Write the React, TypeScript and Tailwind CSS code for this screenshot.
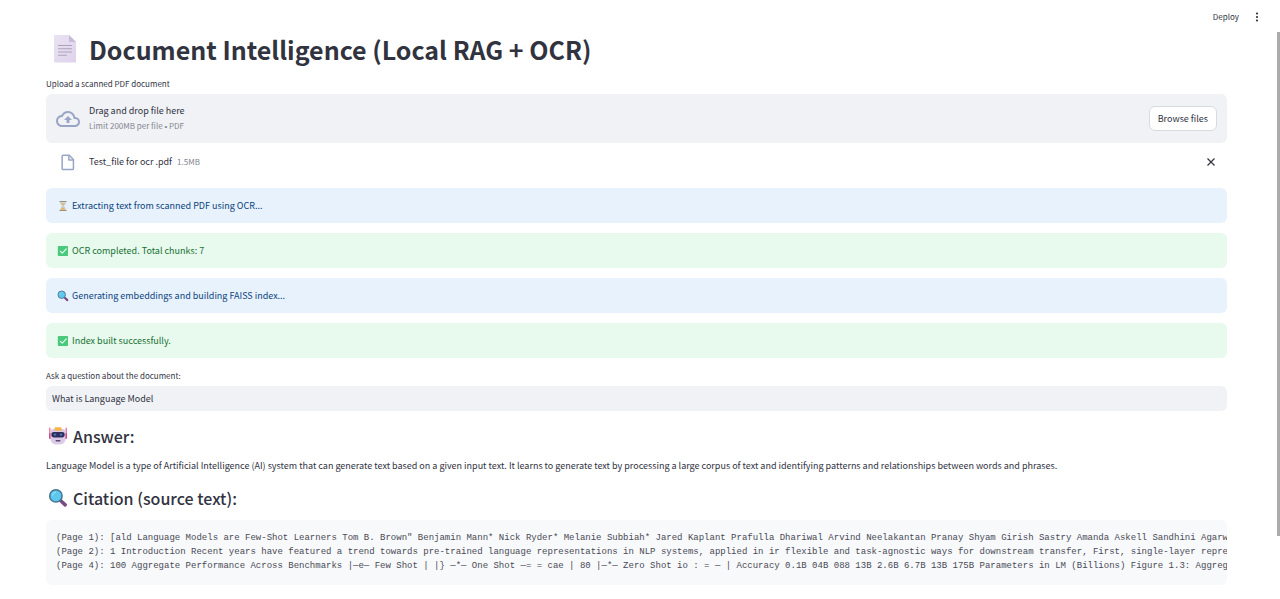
import { useState } from "react";

function PageEmoji() {
  return (
    <svg viewBox="0 0 24 30" className="h-[30px] w-6 shrink-0" aria-hidden="true">
      <defs>
        <linearGradient id="paper" x1="0" y1="0" x2="1" y2="1">
          <stop offset="0" stopColor="#e9e3f2" />
          <stop offset="1" stopColor="#dfd3ec" />
        </linearGradient>
      </defs>
      <path d="M2 1h14l7 7v19.500a1 1 0 0 1-1 1h-20a1 1 0 0 1-1-1V2a1 1 0 0 1 1-1Z" fill="url(#paper)" />
      <path d="M16 1l7 7h-6a1 1 0 0 1-1-1Z" fill="#c9bcd8" />
      <path d="M5.500 11.500h13M5.500 14.800h13M5.500 18h13M5.500 21.200h8" stroke="#ada2b8" strokeWidth="1.100" strokeLinecap="round" />
    </svg>
  );
}

function HourglassEmoji() {
  return (
    <svg viewBox="0 0 12 12" className="size-3 shrink-0" aria-hidden="true">
      <path d="M3 2h6c0 2-1 3-2.300 4C8 7 9 8 9 10H3c0-2 1-3 2.300-4C4 5 3 4 3 2Z" fill="#c3d3dc" />
      <path d="M3.800 3.500h4.400L6 5.800ZM6 7l2.500 3h-5Z" fill="#efb45c" />
      <path d="M2.800 1.500h6.400M2.800 10.500h6.400" stroke="#a3917f" strokeWidth="1.100" strokeLinecap="round" />
    </svg>
  );
}

function CheckEmoji() {
  return (
    <svg viewBox="0 0 12 12" className="size-3 shrink-0" aria-hidden="true">
      <rect x="0.800" y="1" width="10.200" height="10" rx="0.800" fill="#4ac97d" />
      <path d="M3.400 6.300l1.900 1.900 4-4.400" fill="none" stroke="#eafff1" strokeWidth="1.100" strokeLinecap="round" strokeLinejoin="round" />
    </svg>
  );
}

function MagnifierEmoji({ className }: { className: string }) {
  return (
    <svg viewBox="0 0 20 20" className={className} aria-hidden="true">
      <path d="M13 13l4.200 3.800" stroke="#7c4a82" strokeWidth="3.600" strokeLinecap="round" />
      <path d="M11.500 11.500l2 2" stroke="#51606f" strokeWidth="2" />
      <circle cx="7.900" cy="7.900" r="6.200" fill="#5dc8ee" stroke="#4a7391" strokeWidth="1.500" />
      <path d="M4.500 7.200a3.800 3.800 0 0 1 3-3" fill="none" stroke="#94e2f8" strokeWidth="1.200" strokeLinecap="round" />
    </svg>
  );
}

function RobotEmoji() {
  return (
    <svg viewBox="0 0 20 20" className="size-5 shrink-0" aria-hidden="true">
      <path d="M1.800 2v8M18.200 2v8" stroke="#e8608f" strokeWidth="1.200" strokeLinecap="round" />
      <rect x="1" y="7" width="3" height="6" rx="1" fill="#cf4a7f" />
      <rect x="16" y="7" width="3" height="6" rx="1" fill="#cf4a7f" />
      <rect x="6.500" y="1.200" width="7" height="3" rx="1" fill="#f2b64a" />
      <path d="M5 3h10a2.500 2.500 0 0 1 2.500 2.500V13c0 3.500-2.500 5.500-7.500 5.500S2.500 16.500 2.500 13V5.500A2.500 2.500 0 0 1 5 3Z" fill="#dccbe8" />
      <path d="M6.500 3h7v1a.8.8 0 0 1-.8.8H7.300a.8.8 0 0 1-.8-.8Z" fill="#f2b64a" />
      <rect x="3.300" y="6" width="13.400" height="5.400" rx="2.400" fill="#30305c" />
      <circle cx="7" cy="8.600" r="1.200" fill="#4579c4" />
      <circle cx="13" cy="8.600" r="1.200" fill="#4579c4" />
      <rect x="7.500" y="14" width="5" height="1.600" rx="0.800" fill="#5a4a70" />
    </svg>
  );
}

const alerts = [
  { kind: "info", icon: <HourglassEmoji />, text: "Extracting text from scanned PDF using OCR..." },
  { kind: "success", icon: <CheckEmoji />, text: "OCR completed. Total chunks: 7" },
  { kind: "info", icon: <MagnifierEmoji className="size-3 shrink-0" />, text: "Generating embeddings and building FAISS index..." },
  { kind: "success", icon: <CheckEmoji />, text: "Index built successfully." },
];

const citations = `(Page 1): [ald Language Models are Few-Shot Learners Tom B. Brown" Benjamin Mann* Nick Ryder* Melanie Subbiah* Jared Kaplant Prafulla Dhariwal Arvind Neelakantan Pranay Shyam Girish Sastry Amanda Askell Sandhini Agarwal Ariel
(Page 2): 1 Introduction Recent years have featured a trend towards pre-trained language representations in NLP systems, applied in ir flexible and task-agnostic ways for downstream transfer, First, single-layer representations
(Page 4): 100 Aggregate Performance Across Benchmarks |—e— Few Shot | |} —*— One Shot —= = cae | 80 |—*— Zero Shot io : = — | Accuracy 0.1B 04B 088 13B 2.6B 6.7B 13B 175B Parameters in LM (Billions) Figure 1.3: Aggregate performance`;

export default function App() {
  const [question, setQuestion] = useState("What is Language Model");

  return (
    <div className="relative min-h-screen bg-white font-['Noto_Sans_CJK_SC',sans-serif] text-[9px] leading-4 text-[#31333f]">
      <header className="flex h-8 items-center justify-end gap-3 px-[17px] pt-[2px]">
        <button type="button" className="text-[8px]">Deploy</button>
        <button type="button" aria-label="Main menu" className="flex w-3 justify-center">
          <svg viewBox="0 0 4 12" className="h-3 w-1" fill="#31333f" aria-hidden="true">
            <circle cx="2" cy="2.500" r="1.100" />
            <circle cx="2" cy="6" r="1.100" />
            <circle cx="2" cy="9.500" r="1.100" />
          </svg>
        </button>
      </header>
      <div className="absolute right-0 top-8 h-[504px] w-[3px] bg-[#acacb0]" />

      <main className="pb-3 pl-[46px] pr-[53px]">
        <h1 className="flex h-[34px] items-center gap-3 pl-[7px] text-[25px] font-bold leading-[34px]">
          <PageEmoji />
          Document Intelligence (Local RAG + OCR)
        </h1>

        <label htmlFor="browse" className="mt-[10px] block text-[8px]">Upload a scanned PDF document</label>
        <section className="mt-[2px] flex h-[49px] items-center rounded-md bg-[#f0f2f6] px-[10px]">
          <svg viewBox="0 0 24 24" className="size-6 shrink-0" fill="#98a5c4" aria-hidden="true">
            <path d="M19.350 10.040A7.490 7.490 0 0 0 12 4C9.110 4 6.600 5.640 5.350 8.040A5.994 5.994 0 0 0 0 14c0 3.310 2.690 6 6 6h13c2.760 0 5-2.240 5-5 0-2.640-2.050-4.780-4.650-4.960ZM19 18H6c-2.210 0-4-1.790-4-4 0-2.050 1.530-3.760 3.560-3.970l1.070-.110.500-.950A5.469 5.469 0 0 1 12 6c2.620 0 4.880 1.860 5.390 4.430l.300 1.500 1.530.110A2.980 2.980 0 0 1 22 15c0 1.650-1.350 3-3 3ZM8 13h2.550v3h2.900v-3H16l-4-4Z" />
          </svg>
          <div className="ml-[9px] flex-1">
            <p>Drag and drop file here</p>
            <p className="text-[8px] leading-[14px] text-[#84868f]">
              Limit 200MB per file <span className="font-['Liberation_Sans',sans-serif]">•</span> PDF
            </p>
          </div>
          <button id="browse" type="button" className="h-[25px] rounded-md border border-[#d9dae0] bg-white px-2">
            Browse files
          </button>
        </section>

        <div className="mt-[9px] flex h-[19px] items-center px-[10px]">
          <svg viewBox="0 0 24 24" className="mx-[2px] size-5 shrink-0" fill="none" stroke="#98a5c4" strokeWidth="1.800" strokeLinejoin="round" aria-hidden="true">
            <path d="M6 4h7.500l5 5v11a1 1 0 0 1-1 1H6a1 1 0 0 1-1-1V5a1 1 0 0 1 1-1Z" />
            <path d="M13 4v5.500h5.500" />
          </svg>
          <span className="ml-[9px]">Test_file for ocr .pdf</span>
          <span className="ml-[5px] text-[8px] text-[#84868f]">1.5MB</span>
          <button type="button" aria-label="Remove file" className="ml-auto flex size-3 items-center justify-center">
            <svg viewBox="0 0 10 10" className="size-[10px]" stroke="#31333f" strokeWidth="1.200" aria-hidden="true">
              <path d="M1.500 1.500l7 7M8.500 1.500l-7 7" />
            </svg>
          </button>
        </div>

        <div className="mt-[17px] grid gap-[10px]">
          {alerts.map((alert) => (
            <div
              key={alert.text}
              role="status"
              className={
                alert.kind === "info"
                  ? "flex h-[35px] items-center gap-[3px] rounded-md bg-[#e8f2fc] px-[11px] text-[#0b4480]"
                  : "flex h-[35px] items-center gap-[3px] rounded-md bg-[#e8f9ee] px-[11px] text-[#177233]"
              }
            >
              {alert.icon}
              {alert.text}
            </div>
          ))}
        </div>

        <label htmlFor="question" className="mt-[10px] block text-[8px]">Ask a question about the document:</label>
        <input
          id="question"
          type="text"
          value={question}
          onChange={(event) => setQuestion(event.target.value)}
          className="mt-[2px] block h-[25px] w-full rounded-md bg-[#f0f2f6] px-[6px] outline-none"
        />

        <h3 className="mt-[13px] flex h-6 items-center gap-[5px] pl-[2px] text-[16px] font-medium leading-6">
          <RobotEmoji />
          Answer:
        </h3>
        <p className="mt-[10px]">
          Language Model is a type of Artificial Intelligence (AI) system that can generate text based on a given input text. It learns to generate text by processing a large corpus of text and identifying patterns and relationships between words and phrases.
        </p>

        <h3 className="mt-3 flex h-6 items-center gap-[5px] pl-[2px] text-[16px] font-medium leading-6">
          <MagnifierEmoji className="size-5 shrink-0" />
          Citation (source text):
        </h3>
        <pre className="mt-[10px] overflow-x-auto rounded-md bg-[#f8f9fb] pb-3 pl-[10px] pt-[11px] font-['Liberation_Mono',monospace] text-[9px] leading-[14px] text-[#484a55] [scrollbar-width:none]">
          {citations}
        </pre>
      </main>
    </div>
  );
}
